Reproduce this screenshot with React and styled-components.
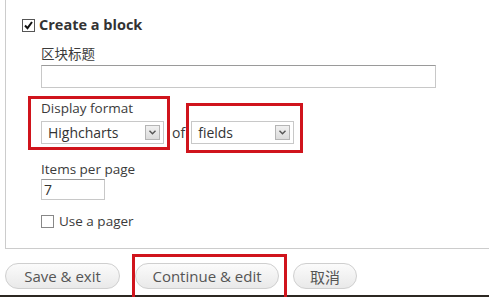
import React from "react";
import styled, { createGlobalStyle } from "styled-components";

const GlobalStyle = createGlobalStyle`
  html, body {
    margin: 0;
    padding: 0;
    background: #ffffff;
  }
  body {
    font-family: "Open Sans", "Noto Sans CJK SC", sans-serif;
    color: #3b3b3b;
    overflow: hidden;
  }
`;

const Page = styled.div`
  width: 489px;
  height: 297px;
  display: flex;
  flex-direction: column;
`;

// Fieldset with only left and bottom borders visible
const Fieldset = styled.div`
  margin-left: 5px;
  height: 249px;
  border-left: 1px solid #cccccc;
  border-bottom: 1px solid #cccccc;
  padding: 16px 0 0 16px;
  box-sizing: border-box;
`;

const Legend = styled.label`
  display: flex;
  align-items: center;
  gap: 4px;
  font-size: 14.5px;
  font-weight: 700;
  color: #333333;
  line-height: 18px;
`;

const Box = styled.span`
  width: 11px;
  height: 11px;
  border: 1px solid ${({ checked }) => (checked ? "#555" : "#888")};
  background: #fff;
  display: inline-flex;
  align-items: center;
  justify-content: center;
  flex-shrink: 0;
`;

const Body = styled.div`
  padding-left: 19px;
  display: flex;
  flex-direction: column;
`;

const Label = styled.div`
  font-size: 13.5px;
  line-height: 17px;
  color: #3b3b3b;
`;

const TextInput = styled.div`
  box-sizing: border-box;
  width: ${({ w }) => w}px;
  height: ${({ h }) => h}px;
  border: 1px solid #c8c8c8;
  border-top-color: #9a9a9a;
  font-size: 14px;
  line-height: ${({ h }) => h - 2}px;
  padding-left: 2px;
  color: #333;
`;

const FormatRow = styled.div`
  display: flex;
  align-items: flex-start;
  margin-left: -13px;
  margin-top: 8px;
`;

const Annot = styled.div`
  border: 3px solid #d0141c;
  box-sizing: border-box;
  padding: ${({ pad }) => pad};
  display: flex;
  flex-direction: column;
  position: relative;
  z-index: 1;
`;

const Of = styled.span`
  font-size: 14px;
  color: #3b3b3b;
  margin: 28px 1px 0 2px;
  line-height: 18px;
`;

const Select = styled.div`
  box-sizing: border-box;
  width: ${({ w }) => w}px;
  height: 23px;
  border: 1px solid #c8c8c8;
  display: flex;
  align-items: center;
  justify-content: space-between;
  padding: 0 3px 0 6px;
  font-size: 14px;
  color: #333;
`;

const Arrow = styled.span`
  width: 15px;
  height: 15px;
  box-sizing: border-box;
  border: 1px solid #b5b5b5;
  background: linear-gradient(#f0f0f0, #dcdcdc);
  display: flex;
  align-items: center;
  justify-content: center;
`;

const Pager = styled.label`
  display: flex;
  align-items: center;
  gap: 5px;
  font-size: 13.5px;
  margin-top: 13px;
  line-height: 17px;
`;

const Actions = styled.div`
  height: 46px;
  display: flex;
  align-items: flex-start;
  padding-left: 5px;
  padding-top: 5px;
  box-sizing: border-box;
`;

const Button = styled.div`
  box-sizing: border-box;
  height: 26px;
  width: ${({ w }) => w}px;
  border: 1px solid #cfcfcf;
  border-radius: 13px;
  background: linear-gradient(#fbfbfb, #e9e9e9);
  color: #555555;
  font-size: 15px;
  display: flex;
  align-items: center;
  justify-content: center;
  margin-top: ${({ mt }) => mt ?? 9}px;
`;

const Highlight = styled.div`
  border: 3px solid #d0141c;
  border-bottom: none;
  height: 48px;
  box-sizing: border-box;
  padding: 6px 0 0 0;
  margin: 0 6px 0 12px;
  width: 155px;
  position: relative;
  z-index: 1;
`;

const Footer = styled.div`
  height: 2px;
  background: #2c2822;
`;

const Check = () => (
  <svg width="9" height="9" viewBox="0 0 9 9">
    <path d="M1 4.5 L3.5 7.2 L8 1" stroke="#111" strokeWidth="2" fill="none" />
  </svg>
);

const Chevron = () => (
  <svg width="7" height="5" viewBox="0 0 7 5">
    <path d="M0.5 0.8 L3.5 3.8 L6.5 0.8" stroke="#555" strokeWidth="1.4" fill="none" />
  </svg>
);

const App = () => (
  <Page>
    <GlobalStyle />
    <Fieldset>
      <Legend>
        <Box checked>
          <Check />
        </Box>
        Create a block
      </Legend>
      <Body>
        <Label style={{ marginTop: 12 }}>区块标题</Label>
        <TextInput w={395} h={23} style={{ marginTop: 2 }} />
        <FormatRow>
          <Annot pad="1px 3px 3px 10px">
            <Label>Display format</Label>
            <Select w={123} style={{ marginTop: 4 }}>
              Highcharts
              <Arrow>
                <Chevron />
              </Arrow>
            </Select>
          </Annot>
          <Of>of</Of>
          <Annot pad="15px 6px 6px 2px" style={{ marginTop: 7 }}>
            <Select w={103}>
              fields
              <Arrow>
                <Chevron />
              </Arrow>
            </Select>
          </Annot>
        </FormatRow>
        <Label style={{ marginTop: 8 }}>Items per page</Label>
        <TextInput w={64} h={21} style={{ marginTop: 1 }}>
          7
        </TextInput>
        <Pager>
          <Box />
          Use a pager
        </Pager>
      </Body>
    </Fieldset>
    <Actions>
      <Button w={115}>Save &amp; exit</Button>
      <Highlight>
        <Button w={144} mt={0}>
          Continue &amp; edit
        </Button>
      </Highlight>
      <Button w={64}>取消</Button>
    </Actions>
    <Footer />
  </Page>
);

export default App;
